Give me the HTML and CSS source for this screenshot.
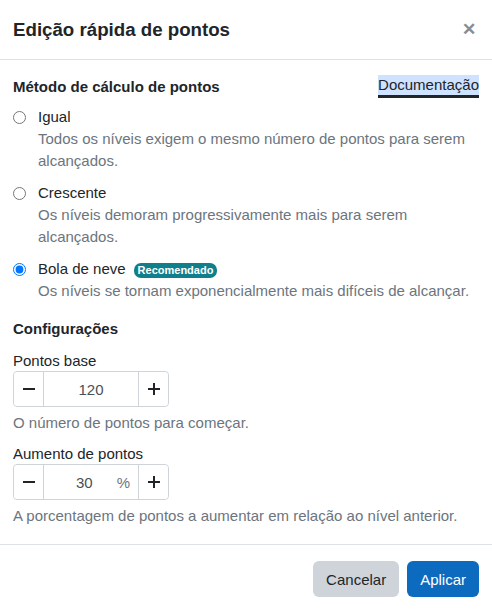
FILE: index.html
```html
<!DOCTYPE html>
<html lang="pt">
<head>
<meta charset="utf-8">
<link rel="stylesheet" href="styles.css">
</head>
<body>
<div class="modal">
  <header class="modal-header">
    <h1 class="modal-title">Edição rápida de pontos</h1>
    <span class="close">✕</span>
  </header>
  <main class="modal-body">
    <div class="section-head">
      <h2 class="section-title">Método de cálculo de pontos</h2>
      <a class="doc-link" href="#">Documentação</a>
    </div>
    <div class="options">
      <label class="option">
        <input type="radio" name="m">
        <span class="opt-text">
          <span class="opt-label">Igual</span>
          <span class="opt-desc">Todos os níveis exigem o mesmo número de pontos para serem alcançados.</span>
        </span>
      </label>
      <label class="option">
        <input type="radio" name="m">
        <span class="opt-text">
          <span class="opt-label">Crescente</span>
          <span class="opt-desc">Os níveis demoram progressivamente mais para serem alcançados.</span>
        </span>
      </label>
      <label class="option">
        <input type="radio" name="m" checked>
        <span class="opt-text">
          <span class="opt-label">Bola de neve <span class="badge">Recomendado</span></span>
          <span class="opt-desc">Os níveis se tornam exponencialmente mais difíceis de alcançar.</span>
        </span>
      </label>
    </div>
    <h2 class="section-title config-title">Configurações</h2>
    <div class="field">
      <div class="field-label">Pontos base</div>
      <div class="stepper">
        <button class="step-btn"><svg width="14" height="14" viewBox="0 0 14 14"><path d="M1 7h12" stroke="#212529" stroke-width="2"/></svg></button>
        <div class="step-input">120</div>
        <button class="step-btn"><svg width="14" height="14" viewBox="0 0 14 14"><path d="M1 7h12M7 1v12" stroke="#212529" stroke-width="2"/></svg></button>
      </div>
      <div class="help">O número de pontos para começar.</div>
    </div>
    <div class="field">
      <div class="field-label">Aumento de pontos</div>
      <div class="stepper">
        <button class="step-btn"><svg width="14" height="14" viewBox="0 0 14 14"><path d="M1 7h12" stroke="#212529" stroke-width="2"/></svg></button>
        <div class="step-input pct"><span class="val">30</span><span class="unit">%</span></div>
        <button class="step-btn"><svg width="14" height="14" viewBox="0 0 14 14"><path d="M1 7h12M7 1v12" stroke="#212529" stroke-width="2"/></svg></button>
      </div>
      <div class="help">A porcentagem de pontos a aumentar em relação ao nível anterior.</div>
    </div>
  </main>
  <footer class="modal-footer">
    <button class="btn btn-secondary">Cancelar</button>
    <button class="btn btn-primary">Aplicar</button>
  </footer>
</div>
</body>
</html>
```

FILE: styles.css
```css
* { box-sizing: border-box; }
html, body { margin: 0; padding: 0; background: #fff; }
body {
  font-family: "Liberation Sans", Arial, sans-serif;
  font-size: 15px;
  color: #212529;
  width: 492px;
}
.modal { display: flex; flex-direction: column; }
.modal-header {
  display: flex;
  align-items: center;
  justify-content: space-between;
  height: 60px;
  padding: 0 13px;
  border-bottom: 1px solid #dee2e6;
}
.modal-title { margin: 0; font-size: 18.7px; font-weight: bold; }
.close { color: #8a8d90; font-size: 17px; font-weight: bold; margin-right: 3px; }
.modal-body { padding: 16px 13px 18px; }
.section-head { display: flex; justify-content: space-between; align-items: flex-start; }
.section-title { margin: 0; font-size: 15px; font-weight: bold; line-height: 22px; }
.doc-link {
  color: #212529;
  text-decoration: none;
  background: #cfe2ff;
  border-bottom: 3px solid #212529;
  line-height: 20px;
  margin-top: -1px;
}
.options { display: flex; flex-direction: column; gap: 10px; margin-top: 8px; }
.option { display: flex; gap: 12px; align-items: flex-start; }
.option input { margin: 5px 0 0 0; width: 13px; height: 13px; flex: none; }
.opt-text { display: flex; flex-direction: column; }
.opt-label { display: flex; align-items: center; gap: 8px; line-height: 22px; }
.opt-desc { color: #6c757d; line-height: 22px; }
.badge {
  background: #0f7f8c;
  color: #fff;
  font-size: 11px;
  font-weight: bold;
  border-radius: 7px;
  padding: 1px 4px;
  line-height: 13px;
  margin-top: 2px;
}
.config-title { margin-top: 16px; }
.field { margin-top: 11px; }
.field + .field { margin-top: 11px; }
.field-label { line-height: 20px; margin-bottom: 0; }
.stepper {
  display: flex;
  width: 156px;
  height: 36px;
  border: 1px solid #ced4da;
  border-radius: 4px;
}
.step-btn {
  width: 29px;
  flex: none;
  border: none;
  background: #fff;
  padding: 0;
  display: flex;
  align-items: center;
  justify-content: center;
  border-radius: 4px;
}
.step-input {
  flex: 1;
  border-left: 1px solid #ced4da;
  border-right: 1px solid #ced4da;
  display: flex;
  align-items: center;
  justify-content: center;
  color: #495057;
}
.step-input.pct { justify-content: flex-end; padding-right: 8px; }
.pct .val { margin-right: 24px; }
.pct .unit { color: #6c757d; }
.help { color: #6c757d; margin-top: 6px; line-height: 20px; }
.modal-footer {
  border-top: 1px solid #dee2e6;
  display: flex;
  justify-content: flex-end;
  gap: 8px;
  padding: 16px 13px;
}
.btn {
  font-family: inherit;
  font-size: 15px;
  border: none;
  border-radius: 6px;
  height: 36px;
  padding: 0 13px;
}
.btn-secondary { background: #ced4da; color: #212529; }
.btn-primary { background: #0d6bbf; color: #fff; }
```
